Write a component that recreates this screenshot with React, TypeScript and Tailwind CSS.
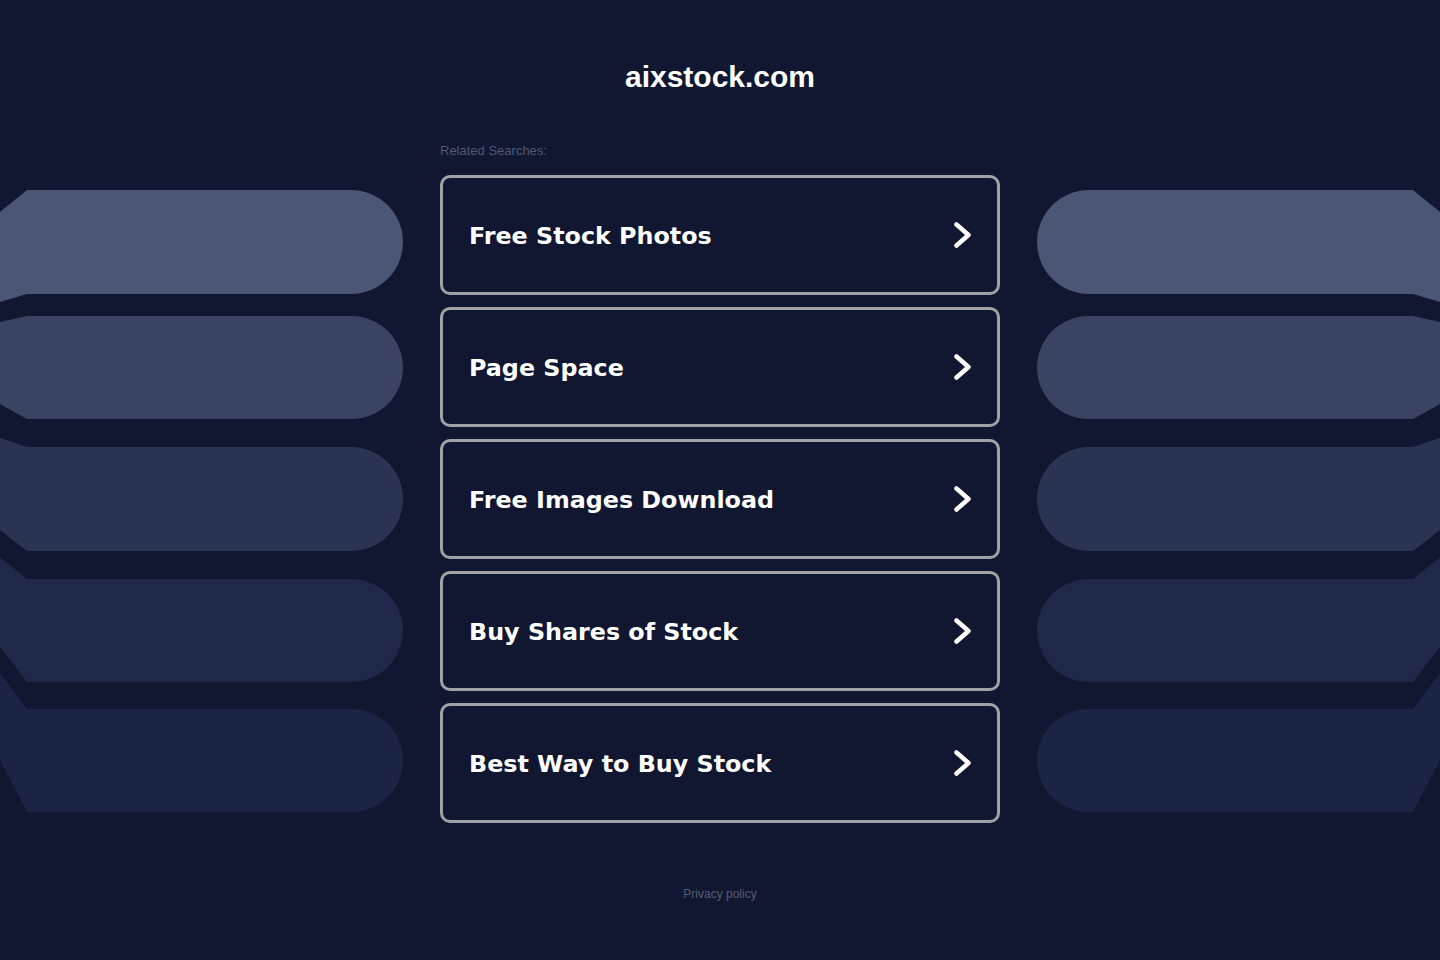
const searches = [
  "Free Stock Photos",
  "Page Space",
  "Free Images Download",
  "Buy Shares of Stock",
  "Best Way to Buy Stock",
];

// left decoration pills: flat top/bottom, and where the slanted tip meets x=0
const pills = [
  { t: 190, b: 294, lt: 212, lb: 302, fill: "#4b5574" },
  { t: 316, b: 419, lt: 322, lb: 404, fill: "#3b4362" },
  { t: 447, b: 551, lt: 438, lb: 530, fill: "#2b3352" },
  { t: 579, b: 682, lt: 557, lb: 647, fill: "#1f2848" },
  { t: 709, b: 812, lt: 673, lb: 760, fill: "#1c2445" },
];

function Pills({ className }: { className: string }) {
  return (
    <svg className={className} width="403" height="830" viewBox="0 0 403 830" aria-hidden>
      {pills.map((p, i) => {
        const r = (p.b - p.t) / 2;
        return (
          <path
            key={i}
            fill={p.fill}
            d={`M0 ${p.lt} L27 ${p.t} L${403 - r} ${p.t} A${r} ${r} 0 0 1 ${403 - r} ${p.b} L27 ${p.b} L0 ${p.lb} Z`}
          />
        );
      })}
    </svg>
  );
}

function Chevron() {
  return (
    <svg width="17" height="26" viewBox="0 0 17 26" fill="none" aria-hidden>
      <polyline
        points="2.5,2.5 14.5,13 2.5,23.5"
        stroke="#ffffff"
        strokeWidth="4.5"
        strokeLinecap="round"
        strokeLinejoin="round"
      />
    </svg>
  );
}

export default function App() {
  return (
    <div className="relative min-h-screen w-full overflow-hidden bg-[#111730] font-['Liberation_Sans',Arial,sans-serif]">
      <Pills className="absolute left-0 top-0" />
      <Pills className="absolute right-0 top-0 -scale-x-100" />

      <div className="relative flex flex-col items-center pt-[60px] pb-16">
        <h1 className="text-[30px] leading-[34px] font-bold text-white">aixstock.com</h1>

        <div className="mt-[49px] w-[560px]">
          <p className="text-[13px] leading-4 text-[#4f5876]">Related Searches:</p>
          <div className="mt-[16px] flex flex-col gap-3">
            {searches.map((s) => (
              <a
                key={s}
                href="#"
                className="flex h-[120px] items-center justify-between rounded-[10px] border-[3px] border-[#a0a2a6] pl-[26px] pr-[26px]"
              >
                <span className="mt-[3px] font-['DejaVu_Sans',Verdana,sans-serif] text-[23.8px] font-bold text-white">
                  {s}
                </span>
                <Chevron />
              </a>
            ))}
          </div>
        </div>

        <a href="#" className="mt-[63px] text-[12px] leading-4 text-[#565d74]">
          Privacy policy
        </a>
      </div>
    </div>
  );
}
